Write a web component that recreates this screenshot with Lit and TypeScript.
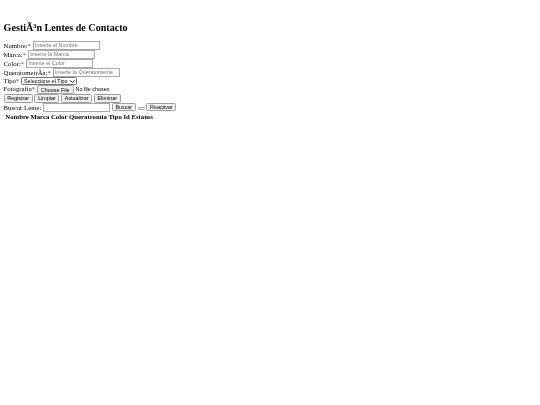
import { LitElement, html, css } from "lit";
import { customElement } from "lit/decorators.js";

@customElement("app-root")
export class AppRoot extends LitElement {
  static styles = css`
    :host { display: block; background: #fff; min-height: 405px; }
    .page {
      zoom: 0.45;
      padding: 8px;
      font-family: "Liberation Serif", "Times New Roman", serif;
      font-size: 15px;
      line-height: 17px;
      color: #000;
      filter: blur(0.2px);
    }
    h2 { font-size: 22.5px; line-height: 26px; font-weight: bold; margin: 40px 0 17px; }
    .req { color: #e00; }
    input, select, button {
      font-family: "Liberation Sans", Arial, sans-serif;
      font-size: 12px;
      box-sizing: border-box;
      vertical-align: baseline;
      margin: 0;
    }
    input[type="text"] {
      width: 149px;
      height: 20px;
      padding: 1px 3px;
      border: 1.5px solid #a8a8a8;
      border-radius: 0;
      background: #fff;
    }
    input::placeholder { color: #757575; }
    input[type="file"] { width: 190px; }
    input[type="file"]::file-selector-button,
    button {
      height: 19px;
      padding: 0 6px;
      border: 1.5px solid #a0a0a0;
      border-radius: 3px;
      background: #f0f0f0;
      color: #000;
      font-size: 12px;
    }
    input[type="file"]::file-selector-button { margin-right: 4px; padding: 0 7px; }
    select {
      appearance: none;
      width: 124px;
      height: 19px;
      padding: 0 16px 0 4px;
      border: 1.5px solid #767676;
      border-radius: 3px;
      background: #fff url("data:image/svg+xml,%3Csvg xmlns='http://www.w3.org/2000/svg' viewBox='0 0 10 6'%3E%3Cpath d='M1 1l4 4 4-4' fill='none' stroke='%23111' stroke-width='1.8'/%3E%3C/svg%3E") no-repeat right 4px center / 10px 6px;
      color: #000;
    }
    input.search { width: 149px; }
    .blank { width: 16px; height: 6px; padding: 0; }
    table { border-collapse: separate; border-spacing: 2px; margin-top: 3px; margin-left: 2px; }
    th { padding: 1px 1.8px; font-weight: bold; line-height: 18px; }
  `;

  render() {
    return html`
      <div class="page">
        <h2>GestiÃ³n Lentes de Contacto</h2>
        <form>
          <label>Nombre:<span class="req">*</span></label>
          <input type="text" placeholder="Inserte el Nombre" /><br />
          <label>Marca:<span class="req">*</span></label>
          <input type="text" placeholder="Inserte la Marca" /><br />
          <label>Color:<span class="req">*</span></label>
          <input type="text" placeholder="Inserte el Color" /><br />
          <label>QueratometrÃ­a:<span class="req">*</span></label>
          <input type="text" placeholder="Inserte la Queratometria" /><br />
          <label>Tipo<span class="req">*</span></label>
          <select><option>Seleccione el Tipo</option></select><br />
          <label>Fotografía<span class="req">*</span></label>
          <input type="file" /><br />
          <button type="button">Registrar</button>
          <button type="button">Limpiar</button>
          <button type="button">Actualizar</button>
          <button type="button">Eliminar</button><br />
          <label>Buscar Lente:</label>
          <input class="search" type="text" />
          <button type="button">Buscar</button>
          <button class="blank" type="button"></button>
          <button type="button">Reactivar</button>
        </form>
        <table>
          <thead><tr><th>Nombre</th><th>Marca</th><th>Color</th><th>Queratromia</th><th>Tipo</th><th>Id</th><th>Estatus</th></tr></thead>
          <tbody></tbody>
        </table>
      </div>
    `;
  }
}
